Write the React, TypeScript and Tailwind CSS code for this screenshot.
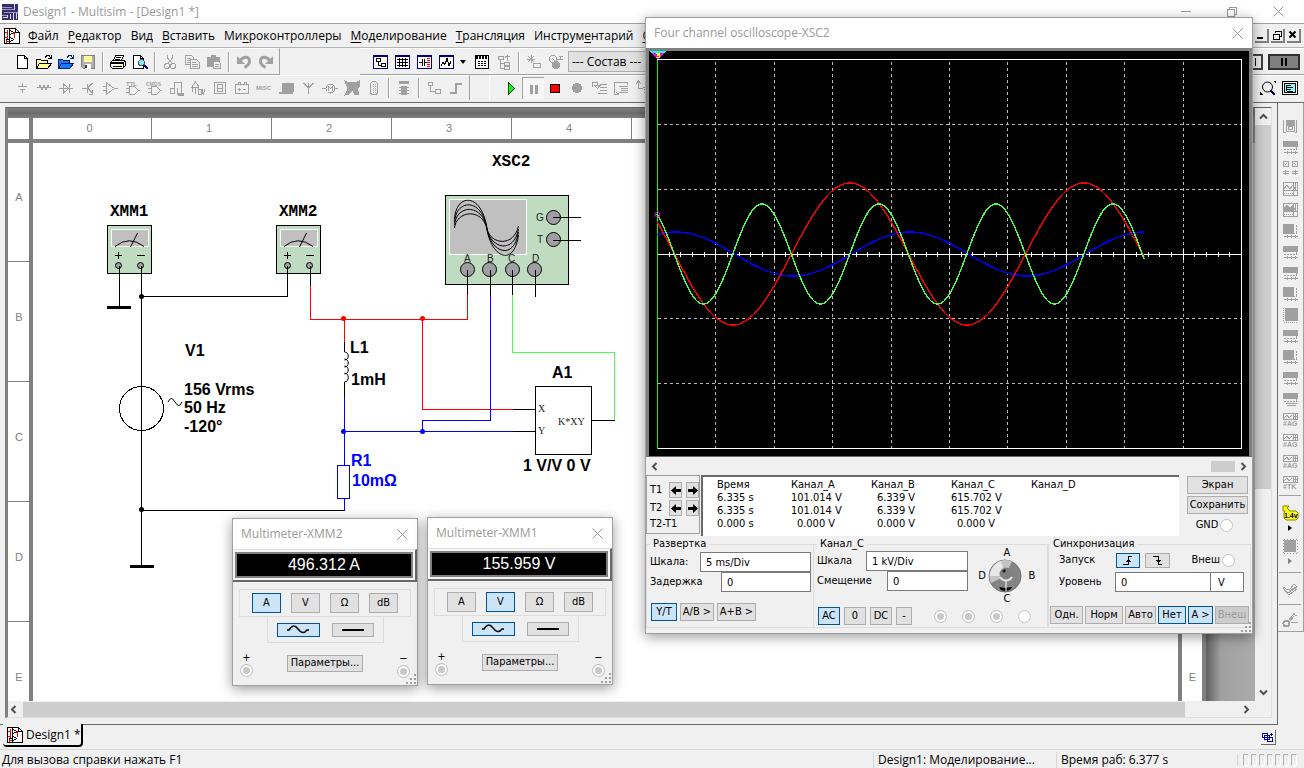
import React from "react";
import { clsx } from "clsx";

const UI = "font-['Open_Sans','Noto_Sans',sans-serif]";
const TAHOMA = "font-['DejaVu_Sans_Condensed','DejaVu_Sans',sans-serif]";

/* ---------- icons ---------- */

function Icon({ children, className }: { children: React.ReactNode; className?: string }) {
  return (
    <svg width="16" height="16" viewBox="0 0 16 16" fill="none" stroke="currentColor" shapeRendering="crispEdges" className={clsx("shrink-0 overflow-visible", className)}>
      {children}
    </svg>
  );
}

const CloseIcon = () => (
  <svg width="11" height="11" viewBox="0 0 11 11" stroke="currentColor">
    <path d="M.5.5l10 10M10.500.5l-10 10" />
  </svg>
);

const SchematicIcon = () => (
  <Icon className="text-black">
    <path d="M.5.5h11l4 4v11H.5z" fill="#fff" />
    <path d="M11.500.5v4h4" />
    <path d="M1 4.500h3M3.500 2v9M1 9.500h3M8 5.500h3M10.500 4v6M3 13.500h2M2.500 11v4" stroke="#f00" />
    <path d="M5.500 2v5l4-2.500zM5.500 9v5l4-2.500zM2 11.500h3" />
  </Icon>
);

const NewIcon = () => (
  <Icon>
    <path d="M3.500 1.500h7l3 3v10h-10z" fill="#fff" />
    <path d="M10.500 1.500v3h3" />
  </Icon>
);

const OpenIcon = ({ fill, line }: { fill: string; line: string }) => (
  <Icon>
    <path d="M.5 14.500v-9h4l1 1h6v3" fill={fill} stroke={line} />
    <path d="M.5 14.500l3-5h12l-4 5z" fill={fill} stroke={line} />
    <path d="M9 3.500l2-2h2l2 3M15.500 1v4M12 4.500h3" stroke={line} />
  </Icon>
);

const SaveIcon = () => (
  <Icon>
    <path d="M1.500 1.500h13v13h-11l-2-2z" fill="#b0b0b0" stroke="#808080" />
    <path d="M4 2h8v6H4z" fill="#ffff99" stroke="none" />
    <path d="M5 10h6v5H5z" fill="#fff" stroke="none" />
    <path d="M5 11h2v3H5z" fill="#333" stroke="none" />
  </Icon>
);

const PrintIcon = () => (
  <Icon>
    <path d="M5.500 1.500h8l-2 5h-8zM2.500 6.500h11l2 1v4l-3 3h-10l-2-2v-4z" fill="#fff" />
    <path d="M1 9.500h12M3 12.500h9M6 3.500h5M5 5.500h5M13.500 8v5M1 8.500h12" />
    <path d="M10 11h2v1h-2z" fill="#ff0" stroke="none" />
  </Icon>
);

const PreviewIcon = () => (
  <Icon>
    <path d="M1.500 1.500h7l3 3v10h-10z" fill="#fff" />
    <path d="M8.500 1.500v3h3" />
    <circle cx="9.500" cy="8.500" r="3" fill="#7fe9ff" stroke="#555" />
    <path d="M12 11l3.500 4" strokeWidth="2" stroke="#008" />
  </Icon>
);

const CutIcon = () => (
  <Icon>
    <path d="M5.500 1v3l5 6M10.500 1v3l-5 6" />
    <circle cx="5" cy="12" r="2.500" />
    <circle cx="11" cy="12" r="2.500" />
  </Icon>
);

const CopyIcon = () => (
  <Icon>
    <path d="M1.500 1.500h6l2 2v7h-8zM3 4.500h4M3 6.500h5M3 8.500h5" />
    <path d="M6.500 5.500h6l3 3v6h-9z" fill="#f0f0f0" />
    <path d="M8 8.500h4M8 10.500h6M8 12.500h6" />
  </Icon>
);

const PasteIcon = () => (
  <Icon>
    <path d="M1 3h4V1h5v2h4v10H1z" fill="currentColor" stroke="none" />
    <path d="M7.500 7.500h5l2 2v5h-7z" fill="#f0f0f0" />
    <path d="M9 10.500h4M9 12.500h4" />
  </Icon>
);

const UndoIcon = ({ flip }: { flip?: boolean }) => (
  <svg width="18" height="16" viewBox="0 0 18 16" fill="none" stroke="currentColor" className={flip ? "-scale-x-100" : ""}>
    <path d="M5 7C8 2 14 2 14.500 6.500 15 10 12 12 9.500 13.500" strokeWidth="3" />
    <path d="M2 2v8h8z" fill="currentColor" stroke="none" />
  </svg>
);

function BlueFrame({ children }: { children: React.ReactNode }) {
  return (
    <Icon className="text-black">
      <path d="M0 1h15v14H0z" fill="#000080" stroke="none" />
      <path d="M1 3h13v11H1z" fill="#fff" stroke="none" />
      {children}
    </Icon>
  );
}

const HierarchyIcon = () => (
  <BlueFrame>
    <path d="M3.500 4.500h4v3h-4zM8.500 9.500h4v3h-4zM5.500 8v3h3" />
  </BlueFrame>
);
const GridIcon = () => (
  <BlueFrame>
    <path d="M2 5.500h11M2 8.500h11M2 11.500h11M4.500 4v9M7.500 4v9M10.500 4v9" />
  </BlueFrame>
);
const PartIcon = () => (
  <BlueFrame>
    <path d="M2 8.500h3M5.500 5v7M7.500 5v7M8 8.500h2" />
    <path d="M11.500 4v9" stroke="#f00" strokeWidth="3" strokeDasharray="1 1" />
  </BlueFrame>
);
const GraphIcon = () => (
  <BlueFrame>
    <path d="M2 11.500l2-3 2 2 2-6 2 7 2-4" />
  </BlueFrame>
);
const CalcIcon = () => (
  <Icon>
    <path d="M1.500 1.500h13v13h-13z" fill="#fff" />
    <path d="M2 3h12" strokeWidth="3" strokeDasharray="2 1" />
    <path d="M4 7.500h9M4 9.500h9M4 11.500h9" strokeDasharray="2 1" />
  </Icon>
);
const TreeIcon = () => (
  <Icon>
    <path d="M2 2.500h5v3H2zM4.500 6v8H8M5 9.500h3M8.500 8.500h5v3h-5zM8.500 12.500h5v3h-5zM11.500 1v6M9 3.500l2.500-2 3 2" />
  </Icon>
);
const StarPartIcon = () => (
  <Icon>
    <path d="M1 5.500h8M5.500 1v8M2 2l6 6M8 2L2 8M7.500 9.500h7v4h-7z" />
  </Icon>
);
const GlobeIcon = () => (
  <Icon>
    <circle cx="5" cy="5" r="3.500" />
    <circle cx="8" cy="11" r="3.500" fill="currentColor" />
    <path d="M9 5.500h6M12.500 2v3M11 2.500h4M4 4l3 3" />
  </Icon>
);

const TINY = "font-['Liberation_Sans',sans-serif] font-bold";

const PARTS: { name: string; art: React.ReactNode }[] = [
  { name: "Source", art: <path d="M8.500 3v3M4 6.500h9M6 9.500h5M8.500 10v3" /> },
  { name: "Basic", art: <path d="M1 7.500h2l1-2 2 4 2-4 2 4 2-4 1 2h2" /> },
  { name: "Diode", art: <path d="M1 8.500h14M5.500 4v9l5-4.500zM11.500 4v9" /> },
  { name: "Transistor", art: <path d="M2 8.500h5M7.500 4v9M12.500 3l-5 5 5 5M12.500 10v4H9" /> },
  { name: "Analog", art: <path d="M4.500 3v11l8-5.500zM1 6.500h3M1 10.500h3M12 8.500h4" /> },
  { name: "TTL", art: <><text x="2" y="6" fontSize="6" fill="currentColor" stroke="none" className={TINY}>TTL</text><path d="M5.500 6.500h5l4 4-4 4h-5zM2 8.500h3M2 12.500h3M14 10.500h2" /></> },
  { name: "CMOS", art: <><text x="0" y="6" fontSize="5" fill="currentColor" stroke="none" className={TINY}>CMOS</text><path d="M5.500 6.500h5l4 4-4 4h-5zM2 8.500h3M2 12.500h3M14 10.500h2" /></> },
  { name: "Misc digital", art: <><path d="M6.500 2.500h7v11M2.500 8.500h4v5h-4zM6.500 2v12M9.500 8v6h4" /><path d="M10 13h5v2h-5z" fill="currentColor" /></> },
  { name: "Mixed", art: <><path d="M2.500 12V6l3-4 3 4v6M1 7.500h8M5.500 14V8" /><path d="M8 9.500h3v5H8zM12.500 9v5M15 9l-2 6" /></> },
  { name: "Indicator", art: <path d="M2.500 2.500h11v11h-11zM5.500 4.500h5v7h-5zM6 8h4" /> },
  { name: "Power", art: <path d="M1.500 4.500h13v9h-13zM4 4V2h2v2M10 4V2h2v2M4 9h3M5.500 7.500v3M9 9h3" /> },
  { name: "Misc", art: <text x="0" y="10" fontSize="6" fill="currentColor" stroke="none" className={TINY}>MISC</text> },
  { name: "Peripherals", art: <path d="M4 3h11v8H4zM1 12h13v1H1z" fill="currentColor" /> },
  { name: "RF", art: <path d="M8.500 14V7M3.500 3l5 5 5-5M8.500 3v5" /> },
  { name: "Electromechanical", art: <><circle cx="8.500" cy="8.500" r="4.500" /><path d="M0 8.500h4M13 8.500h3M6.500 11V6.500l2 2 2-2V11" /></> },
  { name: "NI parts", art: <path d="M1 1l4 2 3-1 3 1 4-2v6l-2 2 2 5-4 1-2-5-4 4-4 1 3-6z" fill="currentColor" /> },
  { name: "Connectors", art: <><rect x="4.500" y="1.500" width="7" height="13" rx="3" /><path d="M7.500 4v9M9.500 4v9" strokeDasharray="1 1" /></> },
];

function InstrumentIcon({ kind }: { kind: number }) {
  if (kind === 0)
    return (
      <Icon>
        <path d="M1.500 2v12h2M14.500 2v12h-2M4.500 13V2h8v11z" />
        <path d="M5 3h7v4H5z" fill="currentColor" />
        <circle cx="8.500" cy="10" r="2" />
      </Icon>
    );
  if (kind === 2)
    return (
      <Icon>
        <path d="M1.500 1.500h5v5h-5zM10.500 1.500h5v5h-5zM3 5l2-2M12 3l2 2M1 11.500h6M1 13.500h6M10 11.500h6M10 13.500h6M3.500 10v5M13.500 10v5" />
      </Icon>
    );
  if (kind === 9)
    return (
      <Icon>
        <path d="M3 1h13v13H3z" fill="currentColor" stroke="none" />
        <path d="M1.500 1v14M2 15.500h13" strokeDasharray="1 1" />
      </Icon>
    );
  if (kind >= 14)
    return (
      <Icon>
        <path d="M1.500 1.500h14v6h-14M1.500 1v7M2 6l3-3 2 3 3-3M11.500 1v7M13.500 1v7M11 4.500h5" />
        <text x="1" y="14" fontSize="7" fill="currentColor" stroke="none" className={TINY}>
          {kind === 17 ? "#TK" : "#AG"}
        </text>
      </Icon>
    );
  if (kind === 3 || kind === 4)
    return (
      <Icon>
        <path d="M1.500 1.500h14v13h-14zM2 8l3-4 3 4 3-4 2 4M11.500 1v13M2 9.500h13M13.500 2v7" />
        {kind === 4 && <path d="M2 6l3-3 3 3 3-3v6H2z" fill="currentColor" />}
        <path d="M2 12.500h9" strokeDasharray="1 1" />
      </Icon>
    );
  return (
    <Icon>
      <path d={kind % 3 === 2 ? "M1 1h11v10H1z" : "M1 2h15v6H1z"} fill="currentColor" stroke="none" />
      <path d="M14.500 2v9M2 10.500h13" strokeDasharray="2 1" />
      <path d={kind === 13 ? "M4 12.500h11M5 14.500h9" : "M2 13.500h14M5.500 12v3M9.500 12v3M13.500 12v3"} />
    </Icon>
  );
}

/* ---------- toolbar pieces ---------- */

function ToolButton({ label, children, className }: { label: string; children: React.ReactNode; className?: string }) {
  return (
    <button aria-label={label} className={clsx("flex h-[22px] w-[22px] shrink-0 items-center justify-center", className)}>
      {children}
    </button>
  );
}

const Divider = () => <div className="mx-[3px] h-5 w-[2px] shrink-0 border-l border-[#a0a0a0] border-r border-r-white" />;

const MENU: [string, number][] = [
  ["Файл", 0],
  ["Редактор", 0],
  ["Вид", -1],
  ["Вставить", 0],
  ["Микроконтроллеры", 2],
  ["Моделирование", 0],
  ["Трансляция", 0],
  ["Инструментарий", 7],
  ["О", 0],
];

function MenuBar() {
  return (
    <nav className="flex h-[25px] items-center border-t border-b border-t-[#a0a0a0] border-b-[#b4b4b4] bg-[#f0f0f0] pr-[3px] pl-1">
      <SchematicIcon />
      <div className="ml-2 flex gap-[9px]">
        {MENU.map(([word, key]) => (
          <button key={word} className="leading-4">
            {key < 0 ? word : <>{word.slice(0, key)}<u className="underline-offset-2">{word[key]}</u>{word.slice(key + 1)}</>}
          </button>
        ))}
      </div>
      <div className="ml-auto flex gap-[2px]">
        {["min", "restore", "close"].map((b) => (
          <button key={b} aria-label={b} className="flex h-[14px] w-[14px] items-center justify-center border-r-2 border-b-2 border-[#808080] bg-[#f0f0f0] text-black">
            <svg width="10" height="10" viewBox="0 0 10 10" stroke="currentColor" fill="none" shapeRendering="crispEdges">
              {b === "min" && <path d="M1 8h6" strokeWidth="2" />}
              {b === "restore" && <path d="M3 1h6v5H7.500M3 1v2M1 4h6v5H1zM1 4.500h6M3 1.500h6" />}
              {b === "close" && <path d="M1.500 1.500l6 6M7.500 1.500l-6 6" strokeWidth="2" shapeRendering="auto" />}
            </svg>
          </button>
        ))}
      </div>
    </nav>
  );
}

function StandardToolbar() {
  return (
    <div className="flex h-[27px]">
      <div className="flex items-center border-t border-r border-b border-t-white border-r-[#a0a0a0] border-b-[#a0a0a0] pr-[2px] pl-[11px]">
        <ToolButton label="New"><NewIcon /></ToolButton>
        <ToolButton label="Open"><OpenIcon fill="#ffff99" line="#000" /></ToolButton>
        <ToolButton label="Open sample"><OpenIcon fill="#1e78ff" line="#00246b" /></ToolButton>
        <ToolButton label="Save"><SaveIcon /></ToolButton>
        <Divider />
        <ToolButton label="Print"><PrintIcon /></ToolButton>
        <ToolButton label="Preview"><PreviewIcon /></ToolButton>
        <Divider />
        <ToolButton label="Cut" className="text-[#a0a0a0]"><CutIcon /></ToolButton>
        <ToolButton label="Copy" className="text-[#a0a0a0]"><CopyIcon /></ToolButton>
        <ToolButton label="Paste" className="text-[#a0a0a0]"><PasteIcon /></ToolButton>
        <Divider />
        <ToolButton label="Undo" className="text-[#a0a0a0]"><UndoIcon /></ToolButton>
        <ToolButton label="Redo" className="text-[#a0a0a0]"><UndoIcon flip /></ToolButton>
      </div>
      <div className="ml-20 flex flex-1 items-center border-t border-b border-t-white border-b-[#a0a0a0] pr-1 pl-[10px]">
        <ToolButton label="Hierarchy"><HierarchyIcon /></ToolButton>
        <ToolButton label="Spreadsheet"><GridIcon /></ToolButton>
        <ToolButton label="Database"><PartIcon /></ToolButton>
        <ToolButton label="Grapher"><GraphIcon /></ToolButton>
        <button aria-label="Grapher options" className="w-[13px] pl-[2px]">
          <svg width="6" height="4" viewBox="0 0 6 4"><path d="M0 0h6L3 4z" /></svg>
        </button>
        <ToolButton label="Postprocessor"><CalcIcon /></ToolButton>
        <ToolButton label="Parent sheet" className="text-[#a0a0a0]"><TreeIcon /></ToolButton>
        <Divider />
        <ToolButton label="Create component" className="text-[#a0a0a0]"><StarPartIcon /></ToolButton>
        <ToolButton label="Database manager" className="text-[#a0a0a0]"><GlobeIcon /></ToolButton>
        <select aria-label="Состав" className="ml-px h-[21px] w-32 appearance-none border border-[#adadad] bg-[#e1e1e1] px-[3px]">
          <option>--- Состав ---</option>
        </select>
        <div className="ml-auto flex items-center gap-[5px]">
          <button aria-label="Run switch" className="flex h-4 w-4 items-center justify-center border-2 border-[#404040] bg-[#e8e8e8]">
            <span className="h-2 w-px bg-black" />
          </button>
          <button aria-label="Pause switch" className="flex h-4 w-8 items-center justify-center gap-[2px] border-2 border-[#303030] bg-[#808080]">
            <span className="h-2 w-[2px] bg-black" />
            <span className="h-2 w-[2px] bg-black" />
          </button>
        </div>
      </div>
    </div>
  );
}

function ComponentToolbar() {
  return (
    <div className="flex h-7 border-b border-[#696969] pb-[2px] text-[#a0a0a0]">
      <div className="flex items-center border-r border-[#a0a0a0] border-t border-t-white pr-[2px] pl-[11px]">
        {PARTS.map((p) => (
          <ToolButton key={p.name} label={p.name}><Icon>{p.art}</Icon></ToolButton>
        ))}
        <Divider />
        <ToolButton label="MCU">
          <Icon>
            <path d="M3 1h10v3H3zM5 6h6v9H5z" fill="currentColor" stroke="none" />
            <path d="M3 7.500h10M3 10.500h10M3 13.500h10" />
          </Icon>
        </ToolButton>
        <Divider />
        <ToolButton label="Hierarchical block">
          <Icon><path d="M2.500 2.500h4v3h-4zM4.500 6v5.500H9M9.500 9.500h5v4h-5z" /></Icon>
        </ToolButton>
        <ToolButton label="Bus">
          <Icon><path d="M2 13h6V4h6" strokeWidth="2" /></Icon>
        </ToolButton>
      </div>
      <div className="ml-[19px] flex flex-1 items-center border-t border-l border-white pr-[3px] pl-[10px]">
        <ToolButton label="Run">
          <Icon><path d="M5.500 2.500v12l6-6z" fill="#0f0" stroke="#004000" /></Icon>
        </ToolButton>
        <ToolButton label="Pause" className="border-t border-l border-[#a0a0a0] bg-[#f6f6f6]">
          <Icon><path d="M5.500 4v9M10.500 4v9" strokeWidth="3" /></Icon>
        </ToolButton>
        <ToolButton label="Stop">
          <Icon><path d="M3.500 4.500h9v8h-9z" fill="#f00" stroke="#000" /></Icon>
        </ToolButton>
        <ToolButton label="Record">
          <Icon><circle cx="8" cy="8" r="4.500" fill="currentColor" /></Icon>
        </ToolButton>
        <ToolButton label="Step into">
          <Icon><path d="M1.500 7V2.500h5V6M4 5.500h5l-2.500 3zM9 4.500h7M9 7.500h7M9 10.500h7M7 13.500h9" /></Icon>
        </ToolButton>
        <ToolButton label="Step over">
          <Icon><path d="M6 14.500H1.500v-12h13V5M6 6.500h9M8 8.500h7M8 10.500h7M6 12.500h9M3 12l3 2.500" /></Icon>
        </ToolButton>
        <ToolButton label="Step out">
          <Icon><path d="M3.500 1v7H8M1 4l2.500-3L6 4M8 7.500h8M9 9.500h7M9 12.500h7" /></Icon>
        </ToolButton>
        <div className="ml-auto flex">
          <ToolButton label="Zoom fit" className="text-black">
            <Icon>
              <circle cx="7.500" cy="7" r="5" shapeRendering="auto" />
              <path d="M11 11l4 4" stroke="#000080" strokeWidth="2" />
              <path d="M13 1h3v3zM0 12v3h3z" fill="#000" stroke="none" />
            </Icon>
          </ToolButton>
          <ToolButton label="Full sheet" className="text-black">
            <Icon>
              <path d="M.5 1.500h15v13H.5z" fill="#fff" />
              <path d="M2.500 3.500h11v9h-11z" fill="#8ff" />
              <path d="M5 5.500h4M5 7.500h6M5 9.500h4M5 11.500h6M4.500 5v6" />
            </Icon>
          </ToolButton>
        </div>
      </div>
    </div>
  );
}

/* ---------- schematic ---------- */

function MeterSymbol({ x, name }: { x: number; name: string }) {
  return (
    <g transform={`translate(${x} 0)`}>
      <text x="3" y="216" fontSize="16" className="font-['Liberation_Mono',monospace] font-bold">{name}</text>
      <path d="M.5 225.500h44v48H.5z" fill="#c0dcc0" stroke="#000" shapeRendering="crispEdges" />
      <path d="M4.500 229.500h37v17h-37z" fill="#c0c0c0" stroke="#fff" shapeRendering="crispEdges" />
      <path d="M8 246.500Q22 235 37 246.500M23.500 247l7-14M8 255.500h7M11.500 252v7M30 255.500h8" fill="none" stroke="#000" />
      <circle cx="11.500" cy="265.500" r="3" fill="#a0a0a4" stroke="#000" />
      <circle cx="33.500" cy="265.500" r="3" fill="#a0a0a4" stroke="#000" />
    </g>
  );
}

function Schematic() {
  return (
    <svg width="1146" height="558" viewBox="33 143 1146 558" fill="none" stroke="#000" className="block">
      <g stroke="none" fill="#000">
        <MeterSymbol x={107} name="XMM1" />
        <MeterSymbol x={276} name="XMM2" />
      </g>

      {/* wires */}
      <g shapeRendering="crispEdges">
        <path d="M119.500 266v41M141.500 266v300M141 296.500h146.500V266M310.500 266v20M141 510.500h203" />
        <path d="M310.500 286v33.500h157V295M344.500 319v23M422.500 319v90.500h90" stroke="#f00" />
        <path d="M344.500 342v10M344.500 382v15" />
        <path d="M344.500 397v68M344.500 498v13M344 431.500h169M422.500 431v-10.500h68V295" stroke="#00f" />
        <path d="M337.500 465.500h12v33h-12z" stroke="#00f" fill="#fff" />
        <path d="M512.500 295v57.500h102v68" stroke="#4dff4d" />
        <path d="M513 409.500h22M513 431.500h22M592 420.500h22.500" />
        <path d="M107 307h24M130 566h24" strokeWidth="3" />
      </g>
      <circle cx="141.500" cy="408.500" r="22" shapeRendering="crispEdges" />
      <path d="M168 402q3-7 7 0t7 0" />
      <path d="M344.500 352c5 0 5 8 0 8m0-1c5 0 5 8 0 8m0-1c5 0 5 8 0 8m0-1c5 0 5 9 0 9" />
      <g stroke="none">
        <circle cx="141.500" cy="296.500" r="2.500" fill="#000" />
        <circle cx="141.500" cy="509.500" r="2.500" fill="#000" />
        <circle cx="343.500" cy="318.500" r="2.500" fill="#f00" />
        <circle cx="422.500" cy="318.500" r="2.500" fill="#f00" />
        <circle cx="343.500" cy="431.500" r="2.500" fill="#00f" />
        <circle cx="422.500" cy="431.500" r="2.500" fill="#00f" />
      </g>

      {/* XSC2 */}
      <path d="M445.500 195.500h123v89h-123z" fill="#c0dcc0" shapeRendering="crispEdges" />
      <path d="M449.500 199.500h77v55h-77z" fill="#c0c0c0" stroke="#fff" shapeRendering="crispEdges" />
      {[0, 1, 2, 3].map((i) => (
        <path key={i} d={`M454.500 ${228 - i * 3}C456 ${211 - i * 6} 482 ${207 - i * 5} 487 229C491 ${245 + i * 4} 514 ${247 + i * 7} 518.500 ${226 + i * 3}`} />
      ))}
      {[467.5, 489.5, 512.5, 534.5].map((cx) => (
        <circle key={cx} cx={cx} cy="269.500" r="7" fill="#a0a0a4" />
      ))}
      <circle cx="553.500" cy="217.500" r="7" fill="#a0a0a4" />
      <circle cx="553.500" cy="239.500" r="7" fill="#a0a0a4" />
      <path d="M467.500 270v25M490.500 270v25M512.500 270v25M535.500 270v27M553 217.500h28M553 240.500h28" shapeRendering="crispEdges" />

      {/* A1 */}
      <path d="M535.500 386.500h56v68h-56z" fill="#fff" shapeRendering="crispEdges" />

      <g stroke="none" fill="#222" fontSize="10" className="font-['Liberation_Sans',sans-serif]">
        <text x="464" y="262">A</text>
        <text x="487" y="262">B</text>
        <text x="508" y="262">C</text>
        <text x="532" y="262">D</text>
        <text x="536" y="221">G</text>
        <text x="537" y="243">T</text>
      </g>
      <g stroke="none" fill="#222" fontSize="10" className="font-['Liberation_Serif',serif]">
        <text x="538" y="412">X</text>
        <text x="538" y="434">Y</text>
        <text x="558" y="425">K*XY</text>
      </g>
      <text x="492" y="166" fontSize="16" fill="#000" stroke="none" className="font-['Liberation_Mono',monospace] font-bold">XSC2</text>
      <g stroke="none" fill="#000" fontSize="16" className="font-['Liberation_Sans',sans-serif] font-bold">
        <text x="185" y="356">V1</text>
        <text x="184" y="395">156 Vrms</text>
        <text x="184" y="413">50 Hz</text>
        <text x="184" y="432">-120°</text>
        <text x="350" y="353">L1</text>
        <text x="351" y="385">1mH</text>
        <text x="552" y="378">A1</text>
        <text x="523" y="471">1 V/V 0 V</text>
        <g fill="#00f">
          <text x="351" y="466">R1</text>
          <text x="352" y="486">10mΩ</text>
        </g>
      </g>
    </svg>
  );
}

function RowRuler({ labels, className }: { labels: string[]; className: string }) {
  return (
    <div className={clsx("flex shrink-0 flex-col overflow-hidden bg-white", className)}>
      {labels.map((r, i) => (
        <div key={i} className={clsx("flex shrink-0 items-center justify-center border-[#808080] pb-[9px] pl-px", i === 0 ? "h-[119px]" : "h-[120px]", i < 4 && "border-b")}>
          {r}
        </div>
      ))}
    </div>
  );
}

function Chevron({ d }: { d: string }) {
  return (
    <svg width="9" height="9" viewBox="0 0 9 9" fill="none" stroke="#505050" strokeWidth="2">
      <path d={d} />
    </svg>
  );
}
const LEFT = "M6.500 1L3 4.500 6.500 8";
const RIGHT = "M2.500 1L6 4.500 2.500 8";
const UP = "M1 6.500L4.500 3 8 6.500";
const DOWN = "M1 2.500L4.500 6 8 2.500";

function Workspace() {
  return (
    <div className="flex min-h-0 flex-1 flex-col border-r border-b border-[#696969] pt-1 pr-[5px] pb-[6px] pl-[5px]">
      <div className="flex min-h-0 flex-1 flex-col border-t border-r border-b border-l-[3px] border-[#808080] border-t-[#606060] border-r-[#e0e0e0] border-b-[#e0e0e0]">
        <div className="flex min-h-0 flex-1">
          <div className="flex min-w-0 flex-1 flex-col overflow-hidden bg-[#808080] font-['Liberation_Sans',sans-serif] text-[11px] text-[#808080]">
            <div className="h-[10px] shrink-0 bg-linear-to-b from-[#808080] via-[#6c6c6c] to-[#808080]" />
            <div className="flex h-[21px] shrink-0 gap-1">
              <div className="w-[21px] shrink-0 bg-white" />
              <div className="flex flex-1 overflow-hidden bg-white">
                {["0", "1", "2", "3", "4", ""].map((c, i) => (
                  <div key={i} className={clsx("flex shrink-0 items-center justify-center border-r border-[#808080] pr-[5px]", i === 0 ? "w-[119px]" : "w-[120px]")}>
                    {c}
                  </div>
                ))}
              </div>
              <div className="w-[73px]" />
            </div>
            <div className="mt-1 flex min-h-0 flex-1 gap-1">
              <RowRuler labels={["A", "B", "C", "D", "E"]} className="w-[21px]" />
              <div className="min-w-0 flex-1 overflow-hidden bg-white"><Schematic /></div>
              <div className="flex shrink-0">
                <RowRuler labels={["", "", "", "", "E"]} className="w-5" />
                <div className="w-1 bg-[#808080]" />
                <div className="w-[49px] bg-linear-to-r from-[#606060] via-[#a0a0a0] via-30% to-[#ababab]" />
              </div>
            </div>
          </div>
          <div className="flex w-4 shrink-0 flex-col items-center bg-[#f0f0f0]">
            <div className="flex h-[17px] items-center"><Chevron d={UP} /></div>
            <div className="h-[364px] w-full bg-[#cdcdcd]" />
            <div className="mt-auto flex h-[18px] items-center"><Chevron d={DOWN} /></div>
          </div>
        </div>
        <div className="flex h-4 shrink-0 items-center bg-[#f0f0f0] pr-4">
          <div className="flex w-[15px] justify-start pl-px"><Chevron d={LEFT} /></div>
          <div className="h-[15px] flex-1 bg-[#cdcdcd]" />
          <div className="flex w-[70px] justify-end pr-1"><Chevron d={RIGHT} /></div>
        </div>
      </div>
    </div>
  );
}

function InstrumentBar() {
  return (
    <aside className="flex w-[26px] shrink-0 flex-col">
      <div className="flex flex-col items-center border-r border-b border-[#a0a0a0] pt-3 pr-px pb-[3px] text-[#a0a0a0]">
        {Array.from({ length: 18 }, (_, i) => (
          <button key={i} aria-label={`Instrument ${i + 1}`} className="flex h-[21px] items-center"><InstrumentIcon kind={i} /></button>
        ))}
        <div className="mt-[2px] h-px w-[22px] bg-[#a0a0a0]" />
        <button aria-label="Probe" className="mt-2 h-[18px]">
          <svg width="17" height="16" viewBox="0 0 17 16" className="overflow-visible">
            <path d="M1 6V1h6L5 3l3 3h6l2 2v5l-2 2H4l-2-2V8l1-2z" fill="#ff0" stroke="#8a8a00" />
            <text x="2" y="13" fontSize="7" className={TINY}>1.4v</text>
          </svg>
        </button>
        <svg width="4" height="6" viewBox="0 0 4 6" className="mt-[3px]"><path d="M0 0l4 3-4 3z" fill="#000" stroke="none" /></svg>
        <button aria-label="LabVIEW" className="mt-[7px]">
          <Icon>
            <path d="M2 2h12v12H2z" fill="currentColor" stroke="none" />
            <path d="M2 1h13M2 15h13M1 2v13M15 2v13" strokeDasharray="1 2" />
          </Icon>
        </button>
        <svg width="4" height="6" viewBox="0 0 4 6" className="mt-1"><path d="M0 0l4 3-4 3z" fill="#808080" stroke="none" /></svg>
        <div className="mt-2 h-px w-[22px] bg-[#a0a0a0]" />
        <button aria-label="Sheet probe" className="mt-2">
          <Icon><path d="M1 7l5 5 9-6-3-3-4 5-3 1-3-3zM2 9l5 5 8-6M8 10l5-4" /></Icon>
        </button>
        <div className="mt-[7px] h-px w-[22px] bg-[#a0a0a0]" />
        <button aria-label="Current probe" className="mt-[7px]">
          <Icon>
            <circle cx="4.500" cy="11.500" r="3" strokeWidth="2" />
            <path d="M6 9l5-6 1-2 1 2h2M7 10l5-6M9 10.500h7" />
          </Icon>
        </button>
      </div>
    </aside>
  );
}

/* ---------- instrument windows ---------- */

function ToolWindow({ title, className, children }: { title: string; className: string; children: React.ReactNode }) {
  return (
    <section className={clsx("absolute border border-[#a0a0a0] bg-[#f0f0f0] shadow-[0_3px_12px_rgba(0,0,0,0.4)]", className)}>
      <header className="flex h-[30px] items-center justify-between bg-white pr-[9px] pl-2 text-[#999]">
        <h2>{title}</h2>
        <button aria-label="Close"><CloseIcon /></button>
      </header>
      {children}
    </section>
  );
}

function PushButton({ active, className, children, ...rest }: React.ButtonHTMLAttributes<HTMLButtonElement> & { active?: boolean }) {
  return (
    <button
      {...rest}
      className={clsx(
        "flex items-center justify-center border whitespace-nowrap",
        active ? "border-[#005499] bg-[#cce4f7]" : "border-[#adadad]",
        !active && !rest.disabled && "bg-[#e1e1e1]",
        rest.disabled && "bg-[#cccccc] text-[#9a9a9a]",
        className
      )}
    >
      {children}
    </button>
  );
}

function Radio({ label, name, on }: { label: string; name: string; on?: boolean }) {
  return (
    <input
      type="radio"
      name={name}
      aria-label={label}
      defaultChecked={on}
      className="block h-[13px] w-[13px] shrink-0 appearance-none rounded-full border border-[#c4c4c4] bg-white checked:bg-[#c8c8c8] checked:shadow-[inset_0_0_0_2px_#fff]"
    />
  );
}

function Grip() {
  return (
    <svg width="11" height="11" viewBox="0 0 11 11" fill="#a0a0a0" className="absolute right-0 bottom-0">
      <path d="M8 0h2v2H8zM4 4h2v2H4zM8 4h2v2H8zM0 8h2v2H0zM4 8h2v2H4zM8 8h2v2H8z" />
    </svg>
  );
}

function Multimeter({ name, value, mode, className }: { name: string; value: string; mode: string; className: string }) {
  return (
    <ToolWindow title={`Multimeter-${name}`} className={clsx("w-[186px]", className)}>
      <div className="border-t border-r-2 border-b-2 border-t-[#e0e0e0] border-r-[#696969] border-b-[#696969] bg-[#f6f6f6] p-[2px]">
        <output className="block h-[26px] border-2 border-[#808080] bg-black text-center font-['Liberation_Sans',sans-serif] text-[16px] leading-[22px] text-white">{value}</output>
      </div>
      <div className={clsx("flex flex-col items-center px-[6px] pt-[7px] text-[11px]", TAHOMA)}>
        <div className="flex h-7 w-full items-center justify-center gap-[10px] border border-[#dcdcdc]">
          {["A", "V", "Ω", "dB"].map((m) => (
            <PushButton key={m} active={m === mode} className="h-5 w-[29px]">{m}</PushButton>
          ))}
        </div>
        <div className="flex h-[26px] w-[117px] items-center justify-center gap-3 border border-t-0 border-[#dcdcdc]">
          <PushButton active aria-label="AC" className="h-[14px] w-[43px]">
            <svg width="22" height="9" viewBox="0 0 22 9" fill="none" stroke="#000" strokeWidth="1.500"><path d="M0 5h2C5 0 8 0 11 4s6 5 9 1h2" /></svg>
          </PushButton>
          <PushButton aria-label="DC" className="h-[14px] w-[42px]"><span className="h-[2px] w-[22px] bg-black" /></PushButton>
        </div>
      </div>
      <div className={clsx("flex h-[42px] items-start justify-between px-[7px] pt-2 text-[11px]", TAHOMA)}>
        <div className="flex flex-col items-center">
          <span className="leading-[13px]">+</span>
          <Radio name={`${name}-plus`} label="+" on />
        </div>
        <PushButton className="mt-1 h-[17px] w-[76px]">Параметры...</PushButton>
        <div className="flex flex-col items-center pt-[2px]">
          <span className="leading-3">−</span>
          <Radio name={`${name}-minus`} label="−" on />
        </div>
      </div>
      <Grip />
    </ToolWindow>
  );
}

/* Builds a polyline for a sine trace from the left edge to where the sweep stopped. */
function trace(amp: number, period: number, peak: number) {
  const pts: string[] = [];
  for (let x = 657; x <= 1144; x += 1) {
    pts.push(`${x},${(254 - amp * Math.cos((2 * Math.PI * (x - peak)) / period)).toFixed(1)}`);
  }
  return pts.join(" ");
}

const V_LINES = [715, 774, 832, 891, 949, 1007, 1066, 1124, 1183];
const H_LINES = [124, 189, 254, 318, 383];

function Screen() {
  return (
    <svg width="599" height="405" viewBox="649 51 599 405" fill="none" className="block w-full bg-black" preserveAspectRatio="xMinYMin">
      <g shapeRendering="crispEdges">
        <g stroke="#b8b8b8" strokeDasharray="3 3">
          {V_LINES.map((x) => <path key={x} d={`M${x + 0.5} 62v386`} />)}
          {H_LINES.map((y) => <path key={y} d={`M658 ${y + 0.5}h583`} />)}
        </g>
        <path d="M657 59.500h584.500v389H657M657 254.500h584" stroke="#fff" />
        <path d="M657.500 60v389" stroke="#0f0" />
        {Array.from({ length: 49 }, (_, i) => {
          const major = (i + 1) % 5 === 0;
          const x = Math.round(657 + (i + 1) * 11.68) + 0.5;
          return <path key={i} d={major ? `M${x} 249v11` : `M${x} 252v5`} stroke="#fff" />;
        })}
        <path d="M649 51h17l-8.500 8.500z" fill="#f0f" />
        <path d="M649 51h17l-2 2h-13z" fill="#0ff" />
        <path d="M656 53h3v1h-2v1h2v2h-3" stroke="#ff0" />
      </g>
      <g strokeWidth="1.400" shapeRendering="crispEdges">
        <polyline points={trace(22, 234, 910)} stroke="#0000ff" />
        <polyline points={trace(71, 234, 850)} stroke="#ff0000" />
        <polyline points={trace(50, 117, 762)} stroke="#4dff4d" />
      </g>
      <circle cx="657.500" cy="214.500" r="2.500" stroke="#f0f" />
    </svg>
  );
}

const READINGS = [
  ["6.335 s", "101.014 V", "6.339 V", "615.702 V", ""],
  ["6.335 s", "101.014 V", "6.339 V", "615.702 V", ""],
  ["0.000 s", "0.000 V", "0.000 V", "0.000 V", ""],
];

function ArrowPair({ cursor }: { cursor: string }) {
  return (
    <div className="flex h-[18px] items-center">
      <span className="w-[19px]">{cursor}</span>
      <PushButton aria-label={`${cursor} left`} className="mr-1 h-4 w-[13px]">
        <svg width="10" height="9" viewBox="0 0 10 9" className="shrink-0"><path d="M0 4.500L5 0v3h5v3H5v3z" /></svg>
      </PushButton>
      <PushButton aria-label={`${cursor} right`} className="h-4 w-[13px]">
        <svg width="10" height="9" viewBox="0 0 10 9" className="shrink-0"><path d="M10 4.500L5 0v3H0v3h5v3z" /></svg>
      </PushButton>
    </div>
  );
}

function Field({ id, label, value, className }: { id: string; label: string; value: string; className: string }) {
  return (
    <div className="flex h-5 items-center justify-between">
      <label htmlFor={id}>{label}</label>
      <input id={id} defaultValue={value} className={clsx("h-5 border border-[#7a7a7a] bg-white px-[5px] outline-none", className)} />
    </div>
  );
}

function Dial() {
  return (
    <div className="ml-2 grid grid-cols-[12px_34px_16px] grid-rows-[12px_34px_12px] place-items-center leading-3">
      <span className="col-span-3">A</span>
      <span>D</span>
      <svg width="34" height="34" viewBox="0 0 34 34">
        <circle cx="17" cy="17" r="16" fill="#848484" stroke="#707070" />
        <path d="M17 17L3 24A16 16 0 0 1 24 2.500z" fill="#c4c4c4" />
        <path d="M17 17L2 17A16 16 0 0 1 13 2z" fill="#e8e8e8" />
        <path d="M11 28l6 1 7-1-2 3-5 1-4-1z" fill="#000" />
        <circle cx="18" cy="15" r="6.500" fill="#808080" />
        <path d="M12 18a7 7 0 0 0 12 0" fill="none" stroke="#e0e0e0" strokeWidth="2" />
        <path d="M14 12l3-2 1 2-2 2z" fill="#222" />
        <path d="M18 22v10" stroke="#fff" strokeWidth="1" />
      </svg>
      <span className="pl-1">B</span>
      <span className="col-span-3">C</span>
    </div>
  );
}

function Group({ title, className, children }: { title: string; className: string; children: React.ReactNode }) {
  return (
    <fieldset className={clsx("h-[91px] min-w-0 border border-[#dcdcdc]", className)}>
      <legend className="px-[3px] leading-[14px]">{title}</legend>
      {children}
    </fieldset>
  );
}

function Oscilloscope() {
  return (
    <ToolWindow title="Four channel oscilloscope-XSC2" className="top-[17px] left-[645px] w-[608px]">
      <div className="border-x-[3px] border-t-[3px] border-b border-[#808080] border-b-[#696969]"><Screen /></div>
      <div className="flex h-[18px] items-center justify-between px-1">
        <Chevron d={LEFT} />
        <div className="flex items-center gap-1">
          <div className="h-[11px] w-6 bg-[#cdcdcd]" />
          <Chevron d={RIGHT} />
        </div>
      </div>

      <div className={clsx("flex h-[62px] text-[11px]", TAHOMA)}>
        <div className="h-[59px] w-[54px] border border-[#a0a0a0] pt-[5px] pl-[3px]">
          <ArrowPair cursor="T1" />
          <ArrowPair cursor="T2" />
          <span className="block leading-[14px]">T2-T1</span>
        </div>
        <div className="ml-px h-[61px] w-[478px] border-t-2 border-l-2 border-t-[#696969] border-l-[#696969] bg-white pt-px pl-[14px]">
          <table className="w-[394px] table-fixed leading-[13px]">
            <thead>
              <tr className="text-left">
                {["Время", "Канал_A", "Канал_B", "Канал_C", "Канал_D"].map((h, i) => (
                  <th key={h} className={clsx("p-0 font-normal", i === 0 ? "w-[74px]" : "w-20")}>{h}</th>
                ))}
              </tr>
            </thead>
            <tbody>
              {READINGS.map((row, r) => (
                <tr key={r}>
                  {row.map((v, i) => (
                    <td key={i} className="p-0">{i === 0 ? v : <span className="block w-[50px] text-center whitespace-nowrap">{v}</span>}</td>
                  ))}
                </tr>
              ))}
            </tbody>
          </table>
        </div>
        <div className="mr-1 ml-auto flex w-[61px] flex-col gap-[2px] pt-px">
          <PushButton className="h-[18px]">Экран</PushButton>
          <PushButton className="h-[18px]">Сохранить</PushButton>
          <label className="mt-px flex items-center justify-center gap-[2px] pr-[6px]">
            GND <Radio name="gnd" label="GND" />
          </label>
        </div>
      </div>

      <div className={clsx("flex pb-[5px] text-[11px] leading-[14px]", TAHOMA)}>
        <Group title="Развертка" className="w-[168px] pr-[2px] pl-[3px]">
          <div className="pt-px">
            <Field id="timebase" label="Шкала:" value="5 ms/Div" className="w-[111px]" />
            <Field id="delay" label="Задержка" value="0" className="w-[90px]" />
          </div>
          <div className="mt-[11px] ml-px flex gap-[3px]">
            <PushButton active className="h-[18px] w-[26px]">Y/T</PushButton>
            <PushButton className="h-[18px] w-[34px]">A/B &gt;</PushButton>
            <PushButton className="h-[18px] w-[39px]">A+B &gt;</PushButton>
          </div>
        </Group>
        <Group title="Канал_C" className="w-[234px] border-l-0 pl-[3px]">
          <div className="flex h-[55px]">
            <div className="w-[151px]">
              <Field id="channel-scale" label="Шкала" value="1 kV/Div" className="w-[102px]" />
              <Field id="channel-offset" label="Смещение" value="0" className="w-[81px]" />
            </div>
            <div className="-mt-1"><Dial /></div>
          </div>
          <div className="ml-px flex items-center gap-1 pt-px">
            <PushButton active className="h-[18px] w-[22px]">AC</PushButton>
            <PushButton className="h-[18px] w-[22px]">0</PushButton>
            <PushButton className="h-[18px] w-[22px]">DC</PushButton>
            <PushButton className="h-[18px] w-4">-</PushButton>
            <div className="ml-[18px] flex gap-[15px]">
              {["A", "B", "C", "D"].map((c) => (
                <Radio key={c} name={`channel-${c}`} label={`Канал ${c}`} on={c !== "D"} />
              ))}
            </div>
          </div>
        </Group>
        <Group title="Синхронизация" className="w-[203px] border-l pl-px">
          <div className="flex h-[18px] items-center pl-[9px]">
            <span className="w-[57px]">Запуск</span>
            <PushButton active aria-label="Rising edge" className="mr-[5px] h-[15px] w-6">
              <svg width="12" height="11" viewBox="0 0 12 11" fill="none" stroke="#000" shapeRendering="crispEdges"><path d="M1 9.500h5.500v-8H10M4 6.500h5M5 5.500h3" /></svg>
            </PushButton>
            <PushButton aria-label="Falling edge" className="h-[15px] w-[25px]">
              <svg width="12" height="11" viewBox="0 0 12 11" fill="none" stroke="#000" shapeRendering="crispEdges"><path d="M1 1.500h5.500v8H10M4 5.500h5M5 6.500h3" /></svg>
            </PushButton>
            <label className="ml-auto flex items-center gap-[2px] pr-[15px]">Внеш <Radio name="ext" label="Внеш" /></label>
          </div>
          <div className="mt-[3px] flex h-5 items-center pl-[9px]">
            <label htmlFor="level" className="w-14">Уровень</label>
            <input id="level" defaultValue="0" className="h-5 w-24 border border-[#7a7a7a] bg-white px-[5px]" />
            <input aria-label="Unit" defaultValue="V" className="h-5 w-[33px] border border-l-0 border-[#7a7a7a] bg-white px-[7px]" />
          </div>
          <div className="mt-[14px] flex gap-[2px]">
            <PushButton className="h-[18px] w-[33px]">Одн.</PushButton>
            <PushButton className="h-[18px] w-[38px]">Норм</PushButton>
            <PushButton className="h-[18px] w-[31px]">Авто</PushButton>
            <PushButton active className="h-[18px] w-7">Нет</PushButton>
            <PushButton active className="h-[18px] w-[25px]">A &gt;</PushButton>
            <PushButton disabled className="h-[18px] w-[34px]">Внеш</PushButton>
          </div>
        </Group>
      </div>
      <Grip />
    </ToolWindow>
  );
}

export default function App() {
  return (
    <div className={clsx("relative flex h-screen w-full flex-col overflow-hidden bg-[#f0f0f0] text-[12px] text-black", UI)}>
      <header className="flex h-[23px] shrink-0 items-center bg-white text-[#999]">
        <svg width="16" height="16" viewBox="0 0 16 16" className="mr-[5px] ml-[2px]" shapeRendering="crispEdges">
          <path d="M0 0h16v16H0z" fill="#35306b" />
          <path d="M0 3.500h10M0 5.500h13M2 8.500h14M0 11.500h5" stroke="#9a96c8" />
          <path d="M12.500 0v6M8.500 10v5M11.500 9v7M14.500 9v6M5.500 11v3M1 13.500h4" stroke="#dddaf5" />
        </svg>
        <h1>Design1 - Multisim - [Design1 *]</h1>
        <div className="ml-auto flex items-center gap-9 pr-5">
          <button aria-label="Minimize" className="h-px w-[10px] bg-[#999]" />
          <button aria-label="Restore">
            <svg width="10" height="10" viewBox="0 0 10 10" fill="none" stroke="currentColor" shapeRendering="crispEdges">
              <path d="M.5 2.500h7v7h-7zM2.500 2V.5h7v7H8" />
            </svg>
          </button>
          <button aria-label="Close"><CloseIcon /></button>
        </div>
      </header>
      <MenuBar />
      <StandardToolbar />
      <ComponentToolbar />

      <div className="flex min-h-0 flex-1">
        <main className="flex min-w-0 flex-1 flex-col">
          <Workspace />
          <div className="flex h-6 shrink-0 items-start justify-between pr-[2px] pl-[3px]">
            <button className="-mt-px flex h-[23px] items-center gap-[3px] rounded-b-sm border-r-2 border-b-2 border-black bg-[#f0f0f0] pl-1 whitespace-nowrap">
              <SchematicIcon /> Design1 *
            </button>
            <button aria-label="Windows" className="mt-[5px] flex h-[15px] w-[15px] items-center justify-center border-r border-b border-[#696969]">
              <svg width="12" height="11" viewBox="0 0 12 11" fill="#fff" stroke="#00a" shapeRendering="crispEdges">
                <path d="M.5 1.500h5v4h-5zM2.500 3.500h5v4h-5zM5.500 5.500h5v4h-5zM8 2.500h3M9.500 1v3" />
              </svg>
            </button>
          </div>
        </main>
        <InstrumentBar />
      </div>

      <footer className="flex h-[19px] shrink-0 items-center border-t border-[#d7d7d7] pt-px pl-[2px] leading-4">
        <span className="flex-1">Для вызова справки нажать F1</span>
        <span className="w-[183px] border-l border-[#d7d7d7] pl-1">Design1: Моделирование...</span>
        <span className="w-[181px] border-l border-[#d7d7d7] pl-1">Время раб: 6.377 s</span>
        <span className="flex w-[67px] gap-[2px] border-l border-[#d7d7d7] pl-[5px]">
          {Array.from({ length: 7 }, (_, i) => (
            <i key={i} className="h-3 w-[6px] border border-[#b0b0b0] border-r-white border-b-white" />
          ))}
        </span>
      </footer>

      <Multimeter name="XMM2" value="496.312 A" mode="A" className="top-[518px] left-[232px]" />
      <Multimeter name="XMM1" value="155.959 V" mode="V" className="top-[517px] left-[427px]" />
      <Oscilloscope />
    </div>
  );
}
